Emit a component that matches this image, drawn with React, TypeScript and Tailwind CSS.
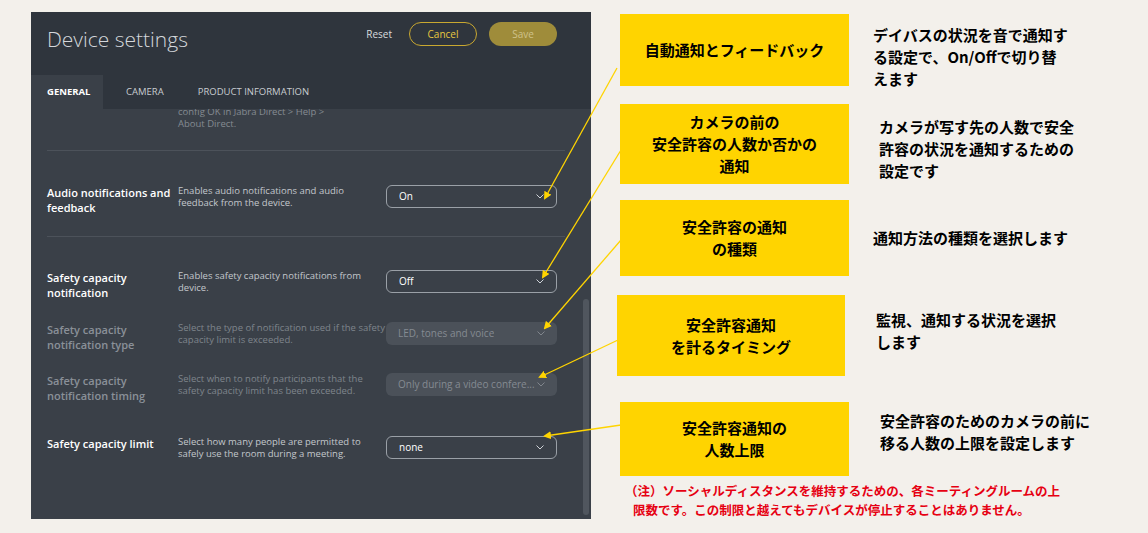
import React from 'react';

const jp = { fontFamily: '"Noto Sans CJK JP", "Noto Sans", sans-serif' };

function Chevron({ dim }: { dim?: boolean }) {
  return (
    <svg width="8" height="5" viewBox="0 0 8 5" className={dim ? 'opacity-40' : ''}>
      <path d="M0.5 0.5 L4 4 L7.5 0.5" fill="none" stroke="#cfd3d8" strokeWidth="1" />
    </svg>
  );
}

function Row({ label, desc, value, disabled, h }: { label: string; desc: string; value: string; disabled?: boolean; h: string }) {
  return (
    <div className={`flex items-start ${h}`}>
      <div className={`w-[131px] text-[11px] leading-[15px] font-semibold ${disabled ? 'text-[#8a9098]' : 'text-white'}`}>{label}</div>
      <div className={`w-[208px] text-[9.5px] leading-[12px] ${disabled ? 'text-[#7f858c]' : 'text-[#c3c7cc]'}`}>{desc}</div>
      <div
        className={`w-[171px] h-[23px] rounded-[6px] flex items-center justify-between px-[12px] text-[10px] ${
          disabled ? 'bg-[#4b5159] text-[#858b92]' : 'border border-[#9aa0a7] text-white'
        }`}
      >
        <span className="truncate">{value}</span>
        <Chevron dim={disabled} />
      </div>
    </div>
  );
}

function Box({ children, cls }: { children: React.ReactNode; cls: string }) {
  return (
    <div className={`bg-[#ffd400] flex items-center justify-center text-center font-bold text-[15px] leading-[22px] text-black ${cls}`} style={jp}>
      {children}
    </div>
  );
}

export default function App() {
  return (
    <div className="relative w-[1148px] h-[533px] bg-[#f3f0eb] overflow-hidden flex" style={{ fontFamily: '"Open Sans", "Liberation Sans", sans-serif' }}>
      <div className="ml-[31px] mt-[12px] w-[560px] h-[507px] bg-[#3a4048] flex flex-col overflow-hidden">
        <div className="h-[63px] bg-[#2f353d] flex items-start justify-between px-[16px] pt-[14px]">
          <div className="text-[21px] font-light text-[#d4d7db] leading-[26px]">Device settings</div>
          <div className="flex items-center gap-[12px] mt-[-8px] pt-[4px] pr-[18px]">
            <span className="text-[10px] text-[#d8dbdf] mr-[5px]">Reset</span>
            <div className="w-[68px] h-[24px] rounded-full border border-[#c9a830] text-[10px] text-[#e8c840] flex items-center justify-center">Cancel</div>
            <div className="w-[68px] h-[24px] rounded-full bg-[#9f8c3a] text-[10px] text-[#cfc28a] flex items-center justify-center">Save</div>
          </div>
        </div>
        <div className="h-[34px] bg-[#2f353d] flex text-[9.5px] text-[#c8ccd0] relative z-10">
          <div className="w-[72px] bg-[#3a4048] flex items-center pl-[16px] font-bold text-white">GENERAL</div>
          <div className="flex items-center pl-[23px]">CAMERA</div>
          <div className="flex items-center pl-[34px]">PRODUCT INFORMATION</div>
        </div>
        <div className="flex flex-1">
          <div className="flex-1 pl-[16px] pr-[18px]">
            <div className="pl-[131px] text-[9.5px] leading-[12px] text-[#858b92] mt-[-3px] h-[44px]">
              config OK in Jabra Direct &gt; Help &gt;<br />About Direct.
            </div>
            <div className="border-t border-[#4c525a]" />
            <div className="pt-[34px]">
              <Row h="h-[51px]" label="Audio notifications and feedback" desc="Enables audio notifications and audio feedback from the device." value="On" />
            </div>
            <div className="border-t border-[#4c525a]" />
            <div className="pt-[33px] flex flex-col">
              <Row h="h-[52px]" label="Safety capacity notification" desc="Enables safety capacity notifications from device." value="Off" />
              <Row h="h-[51px]" disabled label="Safety capacity notification type" desc="Select the type of notification used if the safety capacity limit is exceeded." value="LED, tones and voice" />
              <Row h="h-[63px]" disabled label="Safety capacity notification timing" desc="Select when to notify participants that the safety capacity limit has been exceeded." value="Only during a video confere..." />
              <Row h="h-[40px]" label="Safety capacity limit" desc="Select how many people are permitted to safely use the room during a meeting." value="none" />
            </div>
          </div>
          <div className="w-[6px] mr-[2px] flex flex-col">
            <div className="h-[190px]" />
            <div className="flex-1 mb-[4px] rounded-full bg-[#50565e]" />
          </div>
        </div>
      </div>

      <div className="ml-[26px] mt-[14px] flex flex-col">
        <div className="flex">
          <Box cls="w-[229px] h-[72px] ml-[3px]">自動通知とフィードバック</Box>
          <div className="ml-[24px] mt-[10px] text-[15px] leading-[22px] font-bold text-black" style={jp}>デイバスの状況を音で通知す<br />る設定で、On/Offで切り替<br />えます</div>
        </div>
        <div className="flex mt-[14px]">
          <Box cls="w-[229px] h-[80px] ml-[3px]">カメラの前の<br />安全許容の人数か否かの<br />通知</Box>
          <div className="ml-[30px] mt-[12px] text-[15px] leading-[22px] font-bold text-black" style={jp}>カメラが写す先の人数で安全<br />許容の状況を通知するための<br />設定です</div>
        </div>
        <div className="flex mt-[16px]">
          <Box cls="w-[229px] h-[76px] ml-[3px]">安全許容の通知<br />の種類</Box>
          <div className="ml-[24px] mt-[27px] text-[15px] leading-[22px] font-bold text-black" style={jp}>通知方法の種類を選択します</div>
        </div>
        <div className="flex mt-[19px]">
          <Box cls="w-[228px] h-[81px]">安全許容通知<br />を計るタイミング</Box>
          <div className="ml-[31px] mt-[14px] text-[15px] leading-[22px] font-bold text-black" style={jp}>監視、通知する状況を選択<br />します</div>
        </div>
        <div className="flex mt-[26px]">
          <Box cls="w-[229px] h-[74px] ml-[3px]">安全許容通知の<br />人数上限</Box>
          <div className="ml-[31px] mt-[8px] text-[15px] leading-[22px] font-bold text-black" style={jp}>安全許容のためのカメラの前に<br />移る人数の上限を設定します</div>
        </div>
        <div className="mt-[5px] ml-[-4px] text-[12.5px] leading-[19px] font-bold text-[#e60012]" style={jp}>
          <div className="pl-[12px]">（注）ソーシャルディスタンスを維持するための、各ミーティングルームの上</div>
          <div className="pl-[20px]">限数です。この制限と越えてもデバイスが停止することはありません。</div>
        </div>
      </div>

      <svg className="absolute inset-0 pointer-events-none" width="1148" height="533">
        <defs>
          <marker id="ah" markerWidth="8" markerHeight="8" refX="6" refY="4" orient="auto" markerUnits="userSpaceOnUse">
            <path d="M0 0 L8 4 L0 8 Z" fill="#ffd400" />
          </marker>
        </defs>
        {[
          [617, 68, 545, 198],
          [621, 150, 543, 277],
          [621, 240, 545, 328],
          [618, 340, 540, 377],
          [621, 425, 545, 436],
        ].map(([x1, y1, x2, y2], i) => (
          <line key={i} x1={x1} y1={y1} x2={x2} y2={y2} stroke="#ffd400" strokeWidth="1.3" markerEnd="url(#ah)" />
        ))}
      </svg>
    </div>
  );
}
